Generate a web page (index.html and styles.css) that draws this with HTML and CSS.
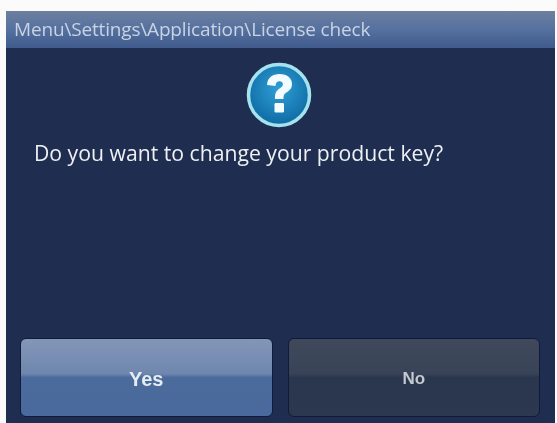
FILE: index.html
```html
<!DOCTYPE html>
<html lang="en">
<head>
<meta charset="utf-8">
<title>License check</title>
<link rel="stylesheet" href="styles.css">
</head>
<body>
<main class="screen">
  <header class="titlebar">Menu\Settings\Application\License check</header>
  <section class="content">
    <svg class="icon" viewBox="0 0 66 66" width="66" height="66" aria-hidden="true">
      <defs>
        <radialGradient id="disc" cx="50%" cy="40%" r="60%">
          <stop offset="0" stop-color="#2f9fd6"/>
          <stop offset="1" stop-color="#0f6aa3"/>
        </radialGradient>
      </defs>
      <circle cx="33" cy="33" r="30.5" fill="url(#disc)" stroke="#a4e2ee" stroke-width="3.5"/>
      <path d="M21 23c.5-7.500 5.500-11 12.500-11 7.500 0 12.500 4 12.500 10 0 4.500-2.500 6.500-5.500 8.500-2.500 1.700-3 2.800-3 6.500h-8.500c-.3-5.500 1-8 4.500-10.500 2.200-1.500 3.400-2.500 3.400-4.200 0-1.800-1.400-3-3.500-3-2.300 0-3.600 1.500-3.900 4.700z" fill="#f2fbfd"/>
      <rect x="28.500" y="41" width="9.500" height="9.500" rx="1.200" fill="#f2fbfd"/>
    </svg>
    <p class="question">Do you want to change your product key?</p>
  </section>
  <footer class="actions">
    <button class="btn btn-yes" type="button">Yes</button>
    <button class="btn btn-no" type="button">No</button>
  </footer>
</main>
</body>
</html>
```
FILE: styles.css
```css
html, body {
  margin: 0;
  height: 100%;
  background: #fbfbfb;
  overflow: hidden;
}
.screen {
  box-sizing: border-box;
  width: 549px;
  height: 412px;
  margin: 11px 0 0 6px;
  display: flex;
  flex-direction: column;
  background: #1f2d50;
  font-family: "Open Sans", "Liberation Sans", sans-serif;
  filter: blur(0.6px);
}
.titlebar {
  height: 37px;
  box-sizing: border-box;
  padding: 5px 0 0 8px;
  font-size: 19px;
  line-height: 26px;
  letter-spacing: -0.170px;
  color: #c9d3e2;
  background: linear-gradient(#6d7f9f 0%, #55719f 50%, #3f5a8c 100%);
}
.content {
  flex: 1;
  display: flex;
  flex-direction: column;
  align-items: center;
}
.icon {
  margin-top: 14px;
  margin-left: -3px;
}
.question {
  align-self: flex-start;
  margin: 11px 0 0 28px;
  font-size: 21.200px;
  line-height: 28px;
  color: #eef1f4;
}
.actions {
  display: flex;
  gap: 15px;
  padding: 0 15px 6px 14px;
}
.btn {
  flex: 1;
  height: 79px;
  padding-top: 4px;
  border: 1px solid #101b38;
  border-radius: 6px;
  font-family: "Liberation Sans", sans-serif;
  font-weight: 700;
}
.btn-yes {
  font-size: 20px;
  color: #e6edf2;
  background: linear-gradient(#8396b8 0%, #6f87ae 45%, #4b6b9c 50%, #4a6a9e 100%);
}
.btn-no {
  font-size: 17px;
  color: #c4c8cf;
  background: linear-gradient(#40495c 0%, #394357 45%, #2a364e 50%, #2b3850 100%);
}
```
